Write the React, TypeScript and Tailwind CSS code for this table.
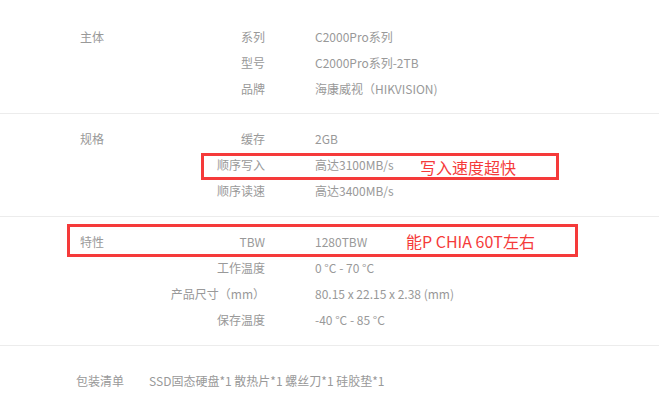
import React from "react";

type Row = [string, string];

const sections: { title: string; rows: Row[] }[] = [
  {
    title: "主体",
    rows: [
      ["系列", "C2000Pro系列"],
      ["型号", "C2000Pro系列-2TB"],
      ["品牌", "海康威视（HIKVISION)"],
    ],
  },
  {
    title: "规格",
    rows: [
      ["缓存", "2GB"],
      ["顺序写入", "高达3100MB/s"],
      ["顺序读速", "高达3400MB/s"],
    ],
  },
  {
    title: "特性",
    rows: [
      ["TBW", "1280TBW"],
      ["工作温度", "0 °C - 70 °C"],
      ["产品尺寸（mm）", "80.15 x 22.15 x 2.38 (mm)"],
      ["保存温度", "-40 °C - 85 °C"],
    ],
  },
];

export default function App() {
  return (
    <div
      className="relative w-[659px] h-[403px] bg-white overflow-hidden text-[12px] text-[#999]"
      style={{ fontFamily: '"Noto Sans CJK SC", "Noto Sans", sans-serif' }}
    >
      {sections.map((s, i) => (
        <div
          key={s.title}
          className={`flex border-b border-[#ececec] pb-[11px] ${i === 0 ? "pt-[24px]" : "pt-[12px]"} ${i === 0 ? "" : "pb-[12px]"}`}
        >
          <div className="w-[160px] pl-[80px] leading-[26px]">{s.title}</div>
          <div className="flex flex-col">
            {s.rows.map(([k, v]) => (
              <div key={k} className="flex leading-[26px]">
                <div className="w-[105px] text-right whitespace-nowrap">{k}</div>
                <div className="ml-[50px] whitespace-nowrap">{v}</div>
              </div>
            ))}
          </div>
        </div>
      ))}
      <div className="flex pt-[22px] pl-[76px] leading-[26px]">
        <div>包装清单</div>
        <div className="ml-[25px]">SSD固态硬盘*1 散热片*1 螺丝刀*1 硅胶垫*1</div>
      </div>

      <div className="absolute left-[201px] top-[153px] w-[358px] h-[27px] border-[3px] border-[#f53a3a]" />
      <div className="absolute left-[420px] top-[156px] text-[16px] leading-[22px] text-[#f53a3a] whitespace-nowrap">
        写入速度超快
      </div>
      <div className="absolute left-[67px] top-[224px] w-[511px] h-[33px] border-[3px] border-[#f53a3a]" />
      <div className="absolute left-[406px] top-[230px] text-[16px] leading-[22px] text-[#f53a3a] whitespace-nowrap">
        能P CHIA 60T左右
      </div>
    </div>
  );
}
